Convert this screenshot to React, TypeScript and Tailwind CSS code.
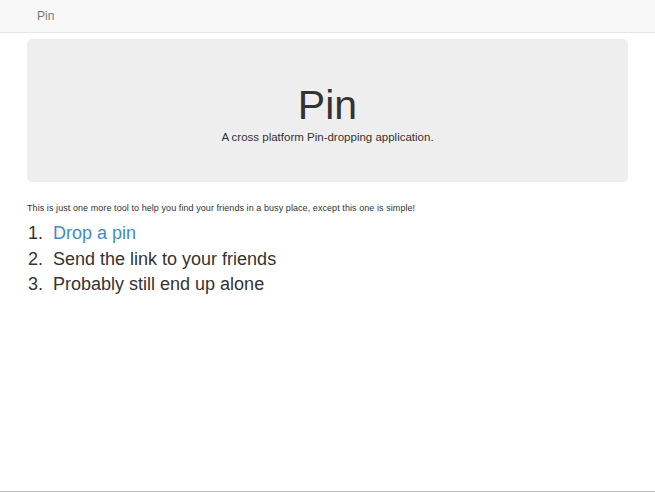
export default function App() {
  return (
    <div
      className="h-[492px] w-full bg-white border-b border-[#bbbbbb] flex flex-col"
      style={{ fontFamily: '"Liberation Sans", Arial, sans-serif' }}
    >
      <div className="h-[33px] bg-[#f8f8f8] border-b border-[#e7e7e7] flex items-center pl-[37px] shrink-0">
        <span className="text-[12px] text-[#777777]">Pin</span>
      </div>
      <div className="px-[27px] pt-[6px]">
        <div className="h-[143px] bg-[#eeeeee] rounded-[5px] flex flex-col items-center pt-[44px]">
          <h1 className="text-[41px] leading-[44px] text-[#333333] font-normal">Pin</h1>
          <p className="text-[11.5px] leading-[16px] text-[#333333] mt-[2px]">
            A cross platform Pin-dropping application.
          </p>
        </div>
        <p className="text-[9px] leading-[12px] text-[#333333] mt-[20px] tracking-[0.07px]">
          This is just one more tool to help you find your friends in a busy place, except this one is simple!
        </p>
        <ol className="mt-[7px] text-[18px] leading-[25.5px] text-[#333333]">
          <li className="flex">
            <span className="w-[26px] pl-[1px]">1.</span>
            <a className="text-[#428bca]">Drop a pin</a>
          </li>
          <li className="flex">
            <span className="w-[26px] pl-[1px]">2.</span>
            <span>Send the link to your friends</span>
          </li>
          <li className="flex">
            <span className="w-[26px] pl-[1px]">3.</span>
            <span>Probably still end up alone</span>
          </li>
        </ol>
      </div>
    </div>
  );
}
